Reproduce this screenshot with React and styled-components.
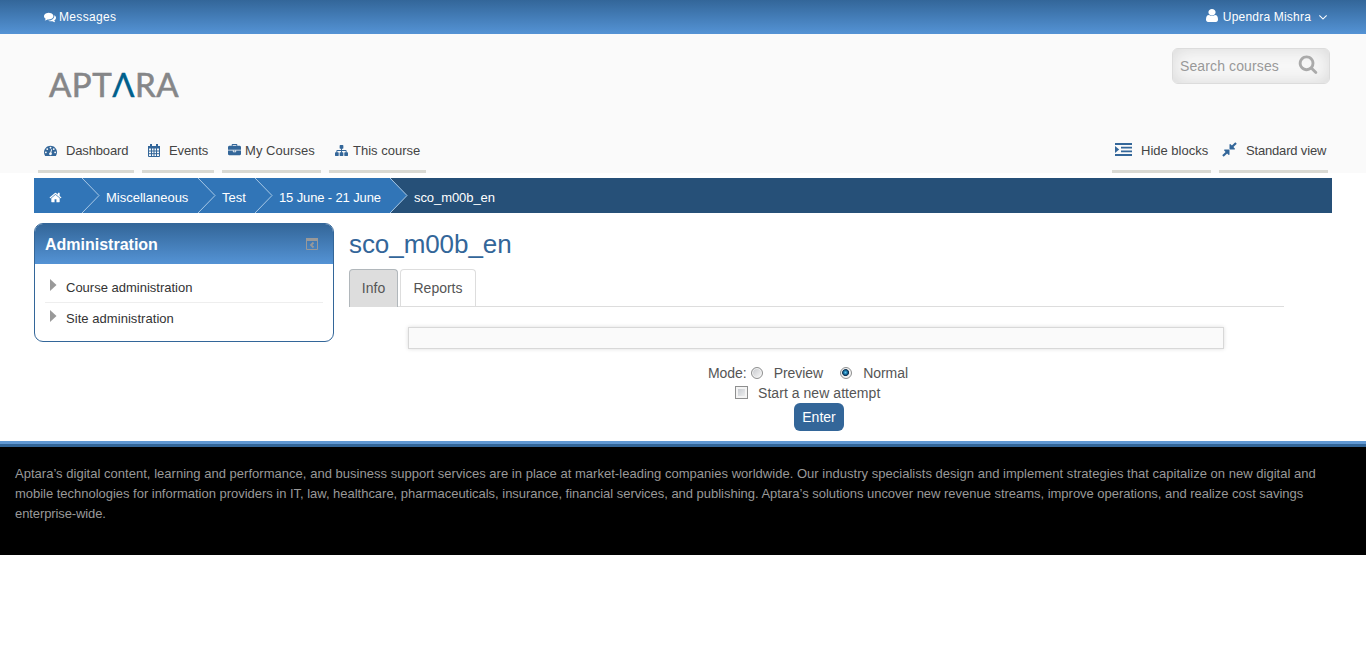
import React from "react";
import styled, { createGlobalStyle } from "styled-components";

const Global = createGlobalStyle`
  * { box-sizing: border-box; }
  body { margin: 0; background: #fff; font: 14px/20px "Liberation Sans", Arial, sans-serif; color: #555; }
  a { color: inherit; text-decoration: none; }
`;

const TopBar = styled.div`
  height: 34px; padding: 0 36px 0 44px;
  display: flex; justify-content: space-between; align-items: center;
  background: linear-gradient(#336699, #5493d5);
  color: #fff; font-size: 12px;
`;
const TopLink = styled.a`
  display: flex; align-items: center; white-space: nowrap;
  gap: ${(p) => p.$gap}px; letter-spacing: ${(p) => p.$track || 0}px;
  svg:first-child { margin-bottom: ${(p) => p.$lift || 0}px; }
`;
const Header = styled.header`
  height: 139px; background: #fafafa; padding: 14px 36px 0 38px;
  display: flex; flex-direction: column; justify-content: space-between;
`;
const Brand = styled.div`
  display: flex; justify-content: space-between; align-items: flex-start;
`;
const Logo = styled.a`
  padding: 18px 0 0 11px; font: 400 33px/36px Lato, sans-serif; color: #858688;
  white-space: nowrap; letter-spacing: 0.5px; -webkit-text-stroke: 0.6px currentColor;
  span { color: #00608c; -webkit-text-stroke: 0.3px #00608c; }
`;
const Search = styled.form`
  width: 158px; height: 36px; border-radius: 6px; border: 1px solid #dcdcdc;
  display: flex; align-items: center; justify-content: space-between; padding: 0 11px 0 7px;
  background: #f8f8f8; box-shadow: inset 0 0 18px #d8d8d8; color: #999; letter-spacing: 0.12px;
  svg { margin-top: -4px; color: #aaa; }
`;
const Nav = styled.nav`
  display: flex; gap: 8px; color: #444; font-size: 13px; padding-right: 2px;
`;
const Spacer = styled.span` flex: 1; `;
const NavItem = styled.a`
  width: ${(p) => p.$w}px; height: 40px; padding: 7px 0 0 ${(p) => p.$pad ?? 6}px;
  display: flex; align-items: flex-start; gap: ${(p) => p.$gap}px;
  border-bottom: 3px solid #d9d9d3; white-space: nowrap; line-height: 22px;
  letter-spacing: ${(p) => p.$track || 0}px;
  svg { margin-top: ${(p) => p.$top ?? 4}px; flex: none; color: #336699; }
`;
const Crumbs = styled.div`
  margin: 5px 34px 0; height: 35px; display: flex; background: #265078;
  color: #fff; font-size: 13px; line-height: 39px;
`;
const Crumb = styled.a`
  width: ${(p) => p.$w}px; padding-left: ${(p) => p.$pad}px; background: #3175b7;
  white-space: nowrap; letter-spacing: ${(p) => p.$track || 0}px;
  svg { display: block; margin-top: 13px; }
`;
const CurrentCrumb = styled.span` padding-left: 6px; letter-spacing: -0.07px; `;
const ArrowSvg = styled.svg` display: block; flex: none; background: ${(p) => p.$after}; `;
const Main = styled.main`
  height: 231px; padding: 10px 0 0 34px; display: flex; gap: 15px; align-items: flex-start;
`;
const Block = styled.aside`
  width: 300px; height: 119px; border: 1px solid #336699; border-radius: 9px; overflow: hidden;
`;
const BlockHead = styled.div`
  height: 40px; padding: 2px 15px 0 10px; display: flex; align-items: center; justify-content: space-between;
  background: linear-gradient(#336699, #5493d5);
  color: #fff; font-size: 16px; font-weight: bold;
  svg { margin-top: -3px; }
`;
const BlockItem = styled.div`
  margin: 0 10px; height: 31px; padding: 7px 0 0 5px; display: flex; gap: 9px;
  color: #333; font-size: 13px; line-height: 20px;
  svg { margin-top: 1px; }
  & + & { border-top: 1px solid #eee; padding-top: 6px; letter-spacing: 0.05px; }
`;
const BlockList = styled.div` padding-top: 7px; `;
const Content = styled.section` width: 935px; `;
const Title = styled.h2`
  margin: 0; height: 46px; font-size: 26px; line-height: 42px; font-weight: 400; color: #336699;
  letter-spacing: -0.07px;
`;
const Tabs = styled.div`
  display: flex; gap: 2px; height: 38px; border-bottom: 1px solid #ddd;
`;
const Tab = styled.a`
  height: ${(p) => (p.$active ? 38 : 37)}px; width: ${(p) => p.$w}px; text-align: center; line-height: 37px;
  border: 1px solid ${(p) => (p.$active ? "#b1b7bb" : "#ddd")}; border-bottom: 0;
  border-radius: 4px 4px 0 0; background: ${(p) => (p.$active ? "#ddd" : "#fff")};
`;
const Intro = styled.div`
  margin: 20px 60px 0 59px; height: 22px; border: 1px solid #d8d8d8; background: #fafafa;
  box-shadow: 0 0 4px #ddd;
`;
const Form = styled.form`
  margin: 14px 0 0; display: flex; flex-direction: column; align-items: flex-start;
`;
const Row = styled.div`
  height: 20px; padding-left: ${(p) => p.$left}px; display: flex; align-items: center; white-space: nowrap;
  letter-spacing: ${(p) => p.$track || 0}px;
`;
const Radio = styled.i`
  width: 12px; height: 12px; border-radius: 50%; border: 1px solid #8e8f8f;
  margin: 0 ${(p) => p.$after}px 0 ${(p) => p.$before}px;
  background: ${(p) => p.$on
    ? "radial-gradient(circle at 45% 45%, #5cc8f0 0, #146a9c 25%, #0b2f4e 40%, #eee 50%)"
    : "linear-gradient(135deg, #c4c6ca, #fafafa)"};
  box-shadow: inset 0 0 0 1px #f4f4f4;
`;
const Check = styled.i`
  width: 13px; height: 13px; border: 1px solid #8e8f8f; margin: 0 10px 2px 0;
  background: linear-gradient(135deg, #c0c4ca, #f6f6f6); box-shadow: inset 0 0 0 2px #f4f4f4;
`;
const Enter = styled.button`
  margin: 0 0 0 445px; width: 50px; height: 28px; border: 0; border-radius: 6px; padding: 0;
  background: #336699; color: #fff; font: 14px "Liberation Sans", Arial, sans-serif;
`;
const Footer = styled.footer`
  height: 111px; border-top: 3px solid #336699; box-shadow: 0 -3px 0 #6098d3;
  background: #000; color: #999; padding: 17px 15px 0; font-size: 13px; line-height: 20px;
  p { margin: 0; white-space: nowrap; }
`;
const Line = styled.span` display: block; letter-spacing: ${(p) => p.$track || 0}px; `;

const paths = {
  comments: "M1408 768q0 139-94 257t-256.5 186.5-353.5 68.5q-86 0-176-16-124 88-278 128-36 9-86 16h-3q-11 0-20.5-8t-11.5-21q-1-3-1-6.5t.5-6.5 2-6l2.5-5 3.5-5.5 4-5 4.5-5 4-4.5q5-6 23-25t26-29.5 22.5-29 25-38.5 20.5-44q-124-72-195-177t-71-224q0-139 94-257t256.5-186.5 353.5-68.5 353.5 68.5 256.5 186.5 94 257zm384 256q0 120-71 224.5t-195 176.5q10 24 20.5 44t25 38.5 22.5 29 26 29.5 23 25q1 1 4 4.5t4.5 5 4 5 3.5 5.5l2.5 5 2 6 .5 6.5-1 6.5q-3 14-13 22t-22 7q-50-7-86-16-154-40-278-128-90 16-176 16-271 0-472-132 58 4 88 4 161 0 309-45t264-129q125-92 192-212t67-254q0-77-23-152 129 71 204 178t75 230z",
  user: "M1536 1399q0 109-62.5 187t-150.5 78h-854q-88 0-150.5-78t-62.5-187q0-85 8.5-160.5t31.5-152 58.5-131 94-89 134.5-34.5q131 128 313 128t313-128q76 0 134.5 34.5t94 89 58.5 131 31.5 152 8.5 160.5zm-256-887q0 159-112.5 271.5t-271.5 112.5-271.5-112.5-112.5-271.5 112.5-271.5 271.5-112.5 271.5 112.5 112.5 271.5z",
  down: "M1395 736q0 13-10 23l-466 466q-10 10-23 10t-23-10l-466-466q-10-10-10-23t10-23l50-50q10-10 23-10t23 10l393 393 393-393q10-10 23-10t23 10l50 50q10 10 10 23z",
  search: "M1216 832q0-185-131.5-316.5t-316.5-131.5-316.5 131.5-131.5 316.5 131.5 316.5 316.5 131.5 316.5-131.5 131.5-316.5zm512 832q0 52-38 90t-90 38q-54 0-90-38l-343-342q-179 124-399 124-143 0-273.5-55.5t-225-150-150-225-55.5-273.5 55.5-273.5 150-225 225-150 273.5-55.5 273.5 55.5 225 150 150 225 55.5 273.5q0 220-124 399l343 343q37 37 37 90z",
  home: "M1472 992v480q0 26-19 45t-45 19h-384v-384h-256v384h-384q-26 0-45-19t-19-45v-480q0-1 .5-3t.5-3l575-474 575 474q1 2 1 6zm223-69l-62 74q-8 9-21 11h-3q-13 0-21-7l-692-577-692 577q-12 8-24 7-13-2-21-11l-62-74q-8-10-7-23.5t11-21.5l719-599q32-26 76-26t76 26l244 204v-195q0-14 9-23t23-9h192q14 0 23 9t9 23v408l219 182q10 8 11 21.5t-7 23.5z",
  briefcase: "M640 256h512v-128h-512v128zm1152 640v480q0 66-47 113t-113 47h-1472q-66 0-113-47t-47-113v-480h672v160q0 26 19 45t45 19h320q26 0 45-19t19-45v-160h672zm-768 0v128h-256v-128h256zm768-480v384h-1792v-384q0-66 47-113t113-47h352v-160q0-40 28-68t68-28h576q40 0 68 28t28 68v160h352q66 0 113 47t47 113z",
  sitemap: "M1792 1248v320q0 40-28 68t-68 28h-320q-40 0-68-28t-28-68v-320q0-40 28-68t68-28h96v-192h-512v192h96q40 0 68 28t28 68v320q0 40-28 68t-68 28h-320q-40 0-68-28t-28-68v-320q0-40 28-68t68-28h96v-192h-512v192h96q40 0 68 28t28 68v320q0 40-28 68t-68 28h-320q-40 0-68-28t-28-68v-320q0-40 28-68t68-28h96v-192q0-52 38-90t90-38h512v-192h-96q-40 0-68-28t-28-68v-320q0-40 28-68t68-28h320q40 0 68 28t28 68v320q0 40-28 68t-68 28h-96v192h512q52 0 90 38t38 90v192h96q40 0 68 28t28 68z",
  compress: "M896 960v448q0 26-19 45t-45 19-45-19l-144-144-332 332q-10 10-23 10t-23-10l-114-114q-10-10-10-23t10-23l332-332-144-144q-19-19-19-45t19-45 45-19h448q26 0 45 19t19 45zm755-672q0 13-10 23l-332 332 144 144q19 19 19 45t-19 45-45 19h-448q-26 0-45-19t-19-45v-448q0-26 19-45t45-19 45 19l144 144 332-332q10-10 23-10t23 10l114 114q10 10 10 23z",
  gauge: "M384 1152q0-53-37.5-90.5t-90.5-37.5-90.5 37.5-37.5 90.5 37.5 90.5 90.5 37.5 90.5-37.5 37.5-90.5zm192-448q0-53-37.5-90.5t-90.5-37.5-90.5 37.5-37.5 90.5 37.5 90.5 90.5 37.5 90.5-37.5 37.5-90.5zm428 481l101-382q6-26-7.5-48.5t-38.5-29.5-48 6.5-30 39.5l-101 382q-60 5-107 43.5t-63 98.5q-20 77 20 146t117 89 146-20 89-117q16-60-6-117t-72-91zm660-33q0-53-37.5-90.5t-90.5-37.5-90.5 37.5-37.5 90.5 37.5 90.5 90.5 37.5 90.5-37.5 37.5-90.5zm-640-640q0-53-37.5-90.5t-90.5-37.5-90.5 37.5-37.5 90.5 37.5 90.5 90.5 37.5 90.5-37.5 37.5-90.5zm448 192q0-53-37.5-90.5t-90.5-37.5-90.5 37.5-37.5 90.5 37.5 90.5 90.5 37.5 90.5-37.5 37.5-90.5zm320 448q0 261-141 483-19 29-54 29h-1402q-35 0-54-29-141-221-141-483 0-182 71-348t191-286 286-191 348-71 348 71 286 191 191 286 71 348z",
};
const Icon = ({ name, size = 13, height, box = "0 0 1792 1792" }) => (
  <svg width={size} height={height || size} viewBox={box} preserveAspectRatio="none" fill="currentColor" overflow="visible"><path d={paths[name]} /></svg>
);
const Calendar = () => (
  <svg width="12" height="13" viewBox="0 0 12 13" fill="currentColor">
    <path d="M0 2h12v2.500H0zM2 0h2v3H2zM8 0h2v3H8z" />
    <path d="M.5 4v8.500h11V4M3.500 4v8.500M6 4v8.500M8.500 4v8.500M0 7h12M0 9.700h12" fill="none" stroke="currentColor" />
  </svg>
);
const IndentIcon = () => (
  <svg width="17" height="13" viewBox="0 0 17 13" fill="currentColor"><path d="M0 0h17v2H0zM6 3.700h11v1.800H6zM6 7.400h11v1.800H6zM0 11h17v2H0zM0 3l4.200 3.500L0 10z" /></svg>
);
const Arrow = ({ after }) => (
  <ArrowSvg $after={after} width="18" height="35" viewBox="0 0 18 35">
    <path d="M0 0L17 17.5L0 35z" fill="#3175b7" />
    <path d="M0 0L17 17.5L0 35" fill="none" stroke="#a9c9e6" />
  </ArrowSvg>
);
const Triangle = () => (
  <svg width="7" height="12" viewBox="0 0 7 12"><path d="M0 0L6.5 6L0 12z" fill="#999" /></svg>
);
const Collapse = () => (
  <svg width="12" height="12" viewBox="0 0 12 12"><path d="M.5 1h11v10.5H.5z" fill="none" stroke="#999" /><path d="M0 0h12v3H0z" fill="#999" /><path d="M7.500 4.500L5 7l2.500 2.500" fill="none" stroke="#999" strokeWidth="1.800" /></svg>
);

export default function App() {
  return (
    <>
      <Global />
      <TopBar>
        <TopLink $gap={3} $track={0.33}><Icon name="comments" size={12} />Messages</TopLink>
        <TopLink $gap={5} $track={0.2} $lift={3}><Icon name="user" size={12} height={13} box="256 128 1280 1536" />Upendra Mishra<Icon name="down" size={14} /></TopLink>
      </TopBar>
      <Header>
        <Brand>
          <Logo>APT<span>Λ</span>RA</Logo>
          <Search>Search courses<Icon name="search" size={20} /></Search>
        </Brand>
        <Nav>
          <NavItem $w={96} $gap={9} $track={-0.15}><Icon name="gauge" />Dashboard</NavItem>
          <NavItem $w={72} $gap={9} $track={-0.1}><Calendar />Events</NavItem>
          <NavItem $w={99} $gap={4} $top={4} $track={0.05}><Icon name="briefcase" />My Courses</NavItem>
          <NavItem $w={97} $gap={5}><Icon name="sitemap" />This course</NavItem>
          <Spacer />
          <NavItem $w={99} $gap={9} $pad={3} $top={3}><IndentIcon />Hide blocks</NavItem>
          <NavItem $w={109} $gap={8} $pad={2} $top={1} $track={-0.17}><Icon name="compress" size={17} />Standard view</NavItem>
        </Nav>
      </Header>
      <Crumbs>
        <Crumb $w={48} $pad={15}><Icon name="home" /></Crumb><Arrow after="#3175b7" />
        <Crumb $w={98} $pad={6}>Miscellaneous</Crumb><Arrow after="#3175b7" />
        <Crumb $w={39} $pad={6}>Test</Crumb><Arrow after="#3175b7" />
        <Crumb $w={117} $pad={6} $track={-0.13}>15 June - 21 June</Crumb><Arrow after="#265078" />
        <CurrentCrumb>sco_m00b_en</CurrentCrumb>
      </Crumbs>
      <Main>
        <Block>
          <BlockHead>Administration<Collapse /></BlockHead>
          <BlockList>
            <BlockItem><Triangle />Course administration</BlockItem>
            <BlockItem><Triangle />Site administration</BlockItem>
          </BlockList>
        </Block>
        <Content>
          <Title>sco_m00b_en</Title>
          <Tabs><Tab $active $w={49}>Info</Tab><Tab $w={76}>Reports</Tab></Tabs>
          <Intro />
          <Form>
            <Row $left={359} $track={-0.05}>Mode:<Radio $before={4} $after={11} />Preview<Radio $on $before={17} $after={11} />Normal</Row>
            <Row $left={386} $track={0.05}><Check />Start a new attempt</Row>
            <Enter type="button">Enter</Enter>
          </Form>
        </Content>
      </Main>
      <Footer>
        <p>
          <Line $track={0.024}>Aptara’s digital content, learning and performance, and business support services are in place at market-leading companies worldwide. Our industry specialists design and implement strategies that capitalize on new digital and</Line>
          <Line $track={-0.022}>mobile technologies for information providers in IT, law, healthcare, pharmaceuticals, insurance, financial services, and publishing. Aptara’s solutions uncover new revenue streams, improve operations, and realize cost savings</Line>
          <Line $track={-0.1}>enterprise-wide.</Line>
        </p>
      </Footer>
    </>
  );
}
